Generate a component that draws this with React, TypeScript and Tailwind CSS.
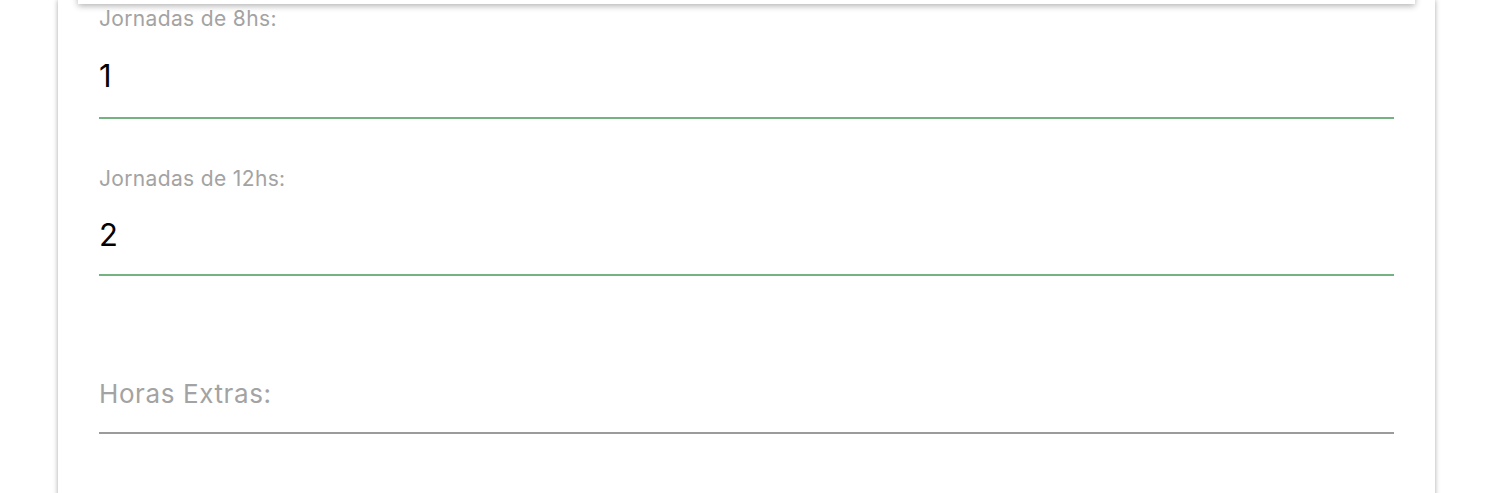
const fields = [
  { label: "Jornadas de 8hs:", value: "1" },
  { label: "Jornadas de 12hs:", value: "2" },
];

export default function App() {
  return (
    <div className="h-[493px] bg-white overflow-hidden" style={{ fontFamily: "Inter, 'Noto Sans', sans-serif" }}>
      <div className="relative ml-[58px] w-[1377px] min-h-[540px] bg-white shadow-[0_0_5px_rgba(0,0,0,0.35)]">
        {/* header sheet sticking out above */}
        <div className="absolute left-[20px] right-[20px] -top-4 h-[20px] bg-white shadow-[0_2px_6px_rgba(0,0,0,0.3)]" />

        <div className="px-[41px] pt-[7px]">
          {fields.map((f, i) => (
            <div key={f.label} className={i === 0 ? "" : "mt-[48px]"}>
              <div className="text-[21px] leading-6 tracking-[0.35px] text-[#a3a3a3]">{f.label}</div>
              <div
                className={
                  "text-[31px] leading-10 text-black border-b-2 border-[#74b27f] " +
                  (i === 0 ? "mt-[25px] pb-[21px]" : "mt-[24px] pb-[19px]")
                }
              >
                {f.value}
              </div>
            </div>
          ))}

          <div className="mt-[103px] text-[26px] leading-[30px] tracking-[0.6px] text-[#a3a3a3] border-b-2 border-[#9b9b9b] pb-[23px]">
            Horas Extras:
          </div>
        </div>
      </div>
    </div>
  );
}
